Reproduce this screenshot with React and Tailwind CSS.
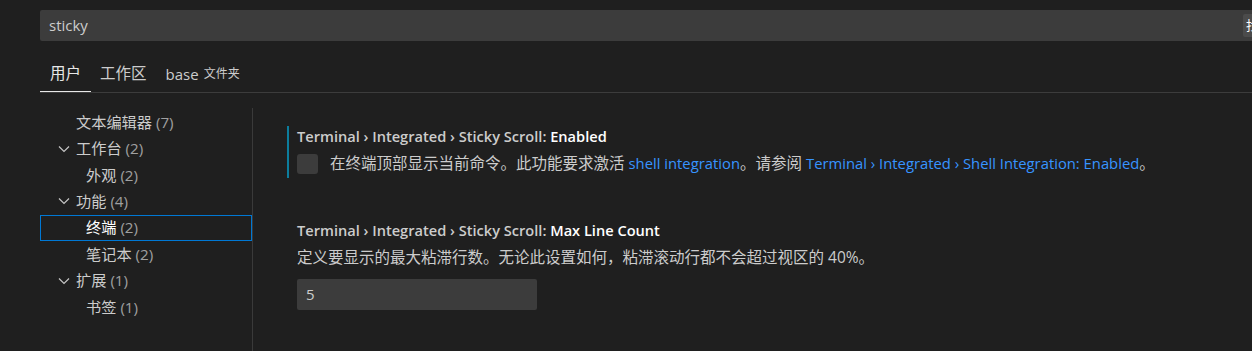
import React from 'react'

const Chevron = () => (
  <svg width="12" height="8" viewBox="0 0 12 8" className="shrink-0">
    <path d="M1 1.5 L6 6.5 L11 1.5" fill="none" stroke="#c5c5c5" strokeWidth="1.2" />
  </svg>
)

const TreeRow = ({ name, count, level, open, selected }) => (
  <div
    className={
      'flex items-center h-[26.4px] ' +
      (selected ? 'border border-[#0078d4] ' : 'border border-transparent ')
    }
  >
    {level === 1 ? (
      <div className="w-[35px] flex justify-end pr-[6px]">{open ? <Chevron /> : null}</div>
    ) : (
      <div className="w-[45px]" />
    )}
    <span className={selected ? 'text-white' : 'text-[#cccccc]'}>{name}</span>
    <span className="text-[#a0a0a0] ml-[4px]">({count})</span>
  </div>
)

const Link = ({ children }) => <span className="text-[#3794ff] text-[14.8px]">{children}</span>

export default function App() {
  return (
    <div className="w-[1252px] h-[351px] overflow-hidden bg-[#1f1f1f] text-[#cccccc] font-['Open_Sans','Noto_Sans_CJK_SC',sans-serif] text-[15px]">
      <div className="pl-[40px] pt-[10px]">
        {/* search */}
        <div className="relative w-[1240px] h-[31px] bg-[#3c3c3c] rounded-[2px] flex items-center pl-[9px]">
          <span className="text-[#cccccc]">sticky</span>
          <div className="absolute left-[1203px] top-[4px] h-[23px] bg-[#4b4b4b] rounded-[2px] px-[3px] flex items-center text-[13px] text-white whitespace-nowrap">
            找到 2 个设置
          </div>
        </div>

        {/* tabs */}
        <div className="mt-[15px] flex border-b border-[#3c3c3c] text-[15.5px]">
          <div className="h-[36px] px-[10px] flex items-center border-b border-[#e7e7e7] text-[#e7e7e7]">用户</div>
          <div className="h-[36px] px-[9px] flex items-center text-[#cccccc]">工作区</div>
          <div className="h-[36px] px-[10px] flex items-center text-[#cccccc]">
            <span className="text-[15px]">base</span>
            <span className="text-[12px] ml-[5px]">文件夹</span>
          </div>
        </div>
      </div>

      {/* body */}
      <div className="flex mt-[15px]">
        <div className="ml-[40px] w-[212px] pt-[1px] text-[15.2px]">
          <TreeRow name="文本编辑器" count="7" level={1} />
          <TreeRow name="工作台" count="2" level={1} open />
          <TreeRow name="外观" count="2" level={2} />
          <TreeRow name="功能" count="4" level={1} open />
          <TreeRow name="终端" count="2" level={2} selected />
          <TreeRow name="笔记本" count="2" level={2} />
          <TreeRow name="扩展" count="1" level={1} open />
          <TreeRow name="书签" count="1" level={2} />
        </div>
        <div className="w-px h-[260px] bg-[#3a3a3a]" />

        <div className="flex-1 pl-[34px] pt-[18px]">
          {/* setting 1 */}
          <div className="border-l-2 border-[#0c7d9d] pl-[8px] pb-[4px] pt-[1px]">
            <div className="h-[18px] leading-[18px] font-semibold whitespace-nowrap text-[14.6px]">
              <span className="text-[#cccccc]">Terminal › Integrated › Sticky Scroll: </span>
              <span className="text-white">Enabled</span>
            </div>
            <div className="mt-[9px] flex items-center h-[20px] whitespace-nowrap">
              <div className="w-[21px] h-[20px] bg-[#3c3c3c] rounded-[3px] mr-[12px]" />
              <span className="text-[15.5px]">
                在终端顶部显示当前命令。此功能要求激活 <Link>shell integration</Link>。请参阅{' '}
                <Link>Terminal › Integrated › Shell Integration: Enabled</Link>。
              </span>
            </div>
          </div>

          {/* setting 2 */}
          <div className="mt-[43px] border-l-2 border-transparent pl-[8px]">
            <div className="h-[18px] leading-[18px] font-semibold whitespace-nowrap text-[14.6px]">
              <span className="text-[#cccccc]">Terminal › Integrated › Sticky Scroll: </span>
              <span className="text-white">Max Line Count</span>
            </div>
            <div className="mt-[9px] h-[18px] leading-[18px] whitespace-nowrap text-[15.5px]">
              定义要显示的最大粘滞行数。无论此设置如何，粘滞滚动行都不会超过视区的 40%。
            </div>
            <div className="mt-[13px] w-[240px] h-[31px] bg-[#3c3c3c] rounded-[2px] flex items-center pl-[9px]">
              5
            </div>
          </div>
        </div>
      </div>
    </div>
  )
}
